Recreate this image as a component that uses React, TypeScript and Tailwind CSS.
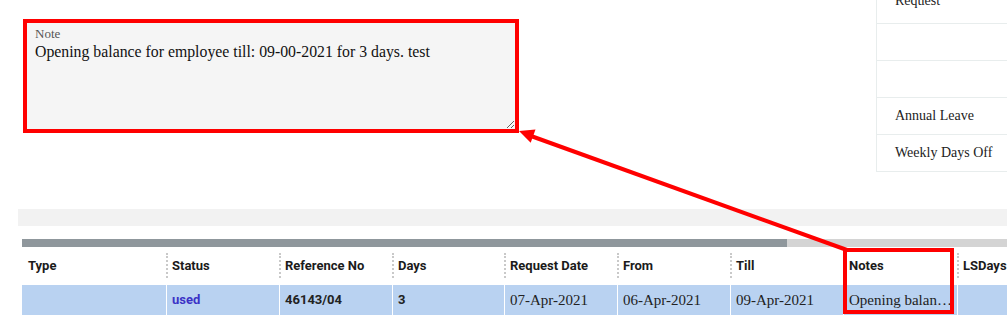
import React from "react";

const serif = { fontFamily: '"Liberation Serif", "Times New Roman", serif' };
const sans = { fontFamily: 'Roboto, "Liberation Sans", Arial, sans-serif' };

const columns = [
  { title: "Type", width: "w-[144px]", value: "", kind: "plain" },
  { title: "Status", width: "w-[113px]", value: "used", kind: "status" },
  { title: "Reference No", width: "w-[113px]", value: "46143/04", kind: "bold" },
  { title: "Days", width: "w-[112px]", value: "3", kind: "bold" },
  { title: "Request Date", width: "w-[113px]", value: "07-Apr-2021", kind: "serif" },
  { title: "From", width: "w-[113px]", value: "06-Apr-2021", kind: "serif" },
  { title: "Till", width: "w-[113px]", value: "09-Apr-2021", kind: "serif" },
  { title: "Notes", width: "w-[114px]", value: "Opening balance for employee till: 09-00-2021 for 3 days. test", kind: "serif" },
  { title: "LSDays", width: "w-[113px]", value: "", kind: "plain" },
];

const sideRows = ["Request", "", "", "Annual Leave", "Weekly Days Off"];

function Arrow() {
  return (
    <svg
      className="absolute inset-0 pointer-events-none"
      width="1007"
      height="319"
      viewBox="0 0 1007 319"
    >
      <line x1="847" y1="250" x2="531" y2="136" stroke="#ff0000" strokeWidth="4" />
      <polygon points="519,131 530.7,142.7 535.5,129.5" fill="#ff0000" />
    </svg>
  );
}

export default function App() {
  return (
    <div className="relative w-[1007px] h-[319px] overflow-hidden bg-white">
      {/* top: note box + side list */}
      <div className="flex h-[209px] items-start">
        <div className="pt-[19px] pl-[23px]">
          <div className="w-[496px] h-[114px] border-4 border-[#ff0000] bg-[#f5f5f5] flex flex-col pl-2 pt-[3px]">
            <span className="text-[13px] leading-[15px] text-[#555]" style={serif}>
              Note
            </span>
            <textarea
              readOnly
              defaultValue="Opening balance for employee till: 09-00-2021 for 3 days. test"
              className="flex-1 w-full bg-transparent outline-none border-0 p-0 pt-px text-[15.8px] leading-[20px] text-[#111]"
              style={serif}
            />
          </div>
        </div>
        <div className="ml-auto w-[131px] border-l border-[#e8eded] flex flex-col">
          {sideRows.map((r, i) => (
            <div
              key={i}
              className={`flex pl-[18px] border-b border-[#e8eded] text-[14px] leading-[14px] text-[#222] ${
                i === 0 ? "h-[24px] items-end pb-[15px]" : "h-[37px] items-center"
              }`}
              style={serif}
            >
              {r}
            </div>
          ))}
        </div>
      </div>

      {/* grey toolbar strip */}
      <div className="ml-[18px] h-[17px] bg-[#f2f2f2]" />

      {/* horizontal scrollbar */}
      <div className="ml-[22px] mt-[13px] h-[8px] flex">
        <div className="w-[765px] bg-[#8f979c]" />
        <div className="flex-1 bg-[#d4d4d4]" />
      </div>

      {/* header row */}
      <div className="ml-[22px] h-[37px] flex" style={sans}>
        {columns.map((c, i) => (
          <div key={c.title} className={`${c.width} shrink-0 relative flex items-center pl-[6px]`}>
            {i > 0 && (
              <span className="absolute left-0 top-[6px] h-[25px] border-l-2 border-dotted border-[#c9c9c9]" />
            )}
            <span className="text-[13px] font-bold text-[#1b1b1b] whitespace-nowrap">{c.title}</span>
          </div>
        ))}
      </div>

      {/* data row */}
      <div className="ml-[22px] mt-px h-[30px] flex bg-[#b9d2f1]">
        {columns.map((c, i) => (
          <div
            key={c.title}
            className={`${c.width} shrink-0 flex items-center pl-[5px] pr-[4px] overflow-hidden ${
              i > 0 ? "border-l border-white" : ""
            }`}
          >
            {c.kind === "status" && (
              <span className="text-[13px] font-bold text-[#3b32c6]" style={sans}>
                {c.value}
              </span>
            )}
            {c.kind === "bold" && (
              <span className="text-[13px] font-bold text-[#222]" style={sans}>
                {c.value}
              </span>
            )}
            {c.kind === "serif" && (
              <span className="text-[15px] text-[#222] truncate" style={serif}>
                {c.value}
              </span>
            )}
          </div>
        ))}
      </div>

      {/* annotation overlays */}
      <div className="absolute left-[843px] top-[248px] w-[111px] h-[66px] border-4 border-[#ff0000] pointer-events-none" />
      <Arrow />
    </div>
  );
}
